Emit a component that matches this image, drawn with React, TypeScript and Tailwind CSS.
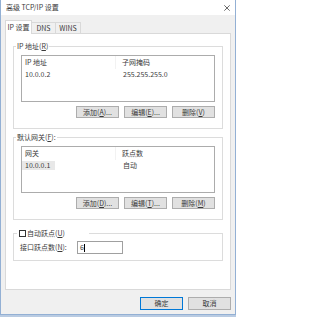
import React from 'react';

function Acc({ text, k, tail = '' }: { text: string; k: string; tail?: string }) {
  return (
    <span>
      {text}(<span className="underline underline-offset-1">{k}</span>){tail}
    </span>
  );
}

function Btn({ children, primary }: { children: React.ReactNode; primary?: boolean }) {
  return (
    <button
      className={
        primary
          ? 'w-[43px] h-[13px] bg-[#e1e1e1] border border-[#0078d7] flex items-center justify-center leading-none'
          : 'w-[43px] h-[13px] bg-[#e1e1e1] border border-[#adadad] flex items-center justify-center leading-none'
      }
    >
      {children}
    </button>
  );
}

interface ListProps {
  cols: [string, string];
  row: [string, string];
  selected?: boolean;
}

function ListBox({ cols, row, selected }: ListProps) {
  return (
    <div className="h-[47px] bg-white border border-[#acacac]">
      <div className="flex h-[13px] items-center">
        <div className="w-[94px] pl-[3px] border-r border-[#f2f2f2] h-full flex items-center">{cols[0]}</div>
        <div className="pl-[6px]">{cols[1]}</div>
      </div>
      <div className="flex h-[11px] items-center">
        <div className="w-[94px]">
          <span className={selected ? 'inline-block bg-[#e8e8e8] pl-[3px] pr-[5px] leading-[9px]' : 'inline-block pl-[3px] leading-[9px]'}>
            {row[0]}
          </span>
        </div>
        <div className="pl-[7px]">{row[1]}</div>
      </div>
    </div>
  );
}

function GroupBox({ legend, children }: { legend: React.ReactNode; children: React.ReactNode }) {
  return (
    <fieldset className="border border-[#dcdcdc]">
      <legend className="ml-[2px] px-[1px] leading-[9px]">{legend}</legend>
      <div className="px-[7px] pb-[10px]">{children}</div>
    </fieldset>
  );
}

function Buttons({ labels }: { labels: [string, string][] }) {
  return (
    <div className="mt-[4px] flex justify-end gap-[5px]">
      {labels.map(([t, k], i) => (
        <button key={k} className="w-[43px] h-[12px] bg-[#e1e1e1] border border-[#adadad] flex items-center justify-center leading-none">
          <Acc text={t} k={k} tail={i < 2 ? '...' : ''} />
        </button>
      ))}
    </div>
  );
}

export default function App() {
  return (
    <div className="w-[236px] h-[317px] bg-[#b9cbe2] font-['Noto_Sans_CJK_SC','Noto_Sans',sans-serif] text-[7px] text-[#3a3a3a]">
      <div className="h-[315px] bg-[#f0f0f0] border-x border-b border-[#93b0d4] flex flex-col">
        {/* Title bar */}
        <div className="h-[15px] bg-white flex items-center justify-between pl-[5px] pr-[5px]">
          <span className="leading-none">高级 TCP/IP 设置</span>
          <svg width="6" height="6" viewBox="0 0 6 6">
            <path d="M0.3 0.3 L5.7 5.7 M5.7 0.3 L0.3 5.7" stroke="#444" strokeWidth="0.8" />
          </svg>
        </div>

        {/* Tabs */}
        <div className="mt-[5px] ml-[4px] h-[13px] flex items-end">
          <div className="relative z-10 w-[27px] h-[14px] -mb-px bg-white border-x border-t border-[#d9d9d9] flex items-center justify-center pb-[1px]">
            IP 设置
          </div>
          <div className="w-[24px] h-[11px] border-t border-r border-[#d9d9d9] flex items-center justify-center">DNS</div>
          <div className="w-[25px] h-[11px] border-t border-r border-[#d9d9d9] flex items-center justify-center">WINS</div>
        </div>

        {/* Panel */}
        <div className="mx-[4px] h-[257px] bg-white border border-[#d9d9d9] px-[7px] pt-[8px]">
          <GroupBox legend={<Acc text="IP 地址" k="R" />}>
            <div className="mt-[4px]">
              <ListBox cols={['IP 地址', '子网掩码']} row={['10.0.0.2', '255.255.255.0']} />
            </div>
            <Buttons labels={[['添加', 'A'], ['编辑', 'E'], ['删除', 'V']]} />
          </GroupBox>

          <div className="mt-[4px]">
            <GroupBox legend={<Acc text="默认网关" k="F" tail=":" />}>
              <div className="mt-[4px]">
                <ListBox cols={['网关', '跃点数']} row={['10.0.0.1', '自动']} selected />
              </div>
              <Buttons labels={[['添加', 'D'], ['编辑', 'T'], ['删除', 'M']]} />
            </GroupBox>
          </div>

          <fieldset className="mt-[9px] border border-[#dcdcdc]">
            <legend className="ml-[3px] px-[2px] w-[72px] h-[9px] flex items-center gap-[1px] leading-[9px]">
              <span className="w-[7px] h-[7px] border border-[#333] bg-white inline-block" />
              <Acc text="自动跃点" k="U" />
            </legend>
            <div className="pt-[3px] pb-[6px] pl-[6px] flex items-center">
              <span className="w-[57px]">
                <Acc text="接口跃点数" k="N" tail=":" />
              </span>
              <div className="w-[46px] h-[13px] border border-[#a0a0a0] bg-white flex items-center pl-[2px]">
                <span className="leading-none">6</span>
                <span className="w-px h-[8px] bg-black" />
              </div>
            </div>
          </fieldset>
        </div>

        {/* Dialog buttons */}
        <div className="mt-[7px] mr-[4px] flex justify-end gap-[5px]">
          <Btn primary>确定</Btn>
          <Btn>取消</Btn>
        </div>
      </div>
    </div>
  );
}
